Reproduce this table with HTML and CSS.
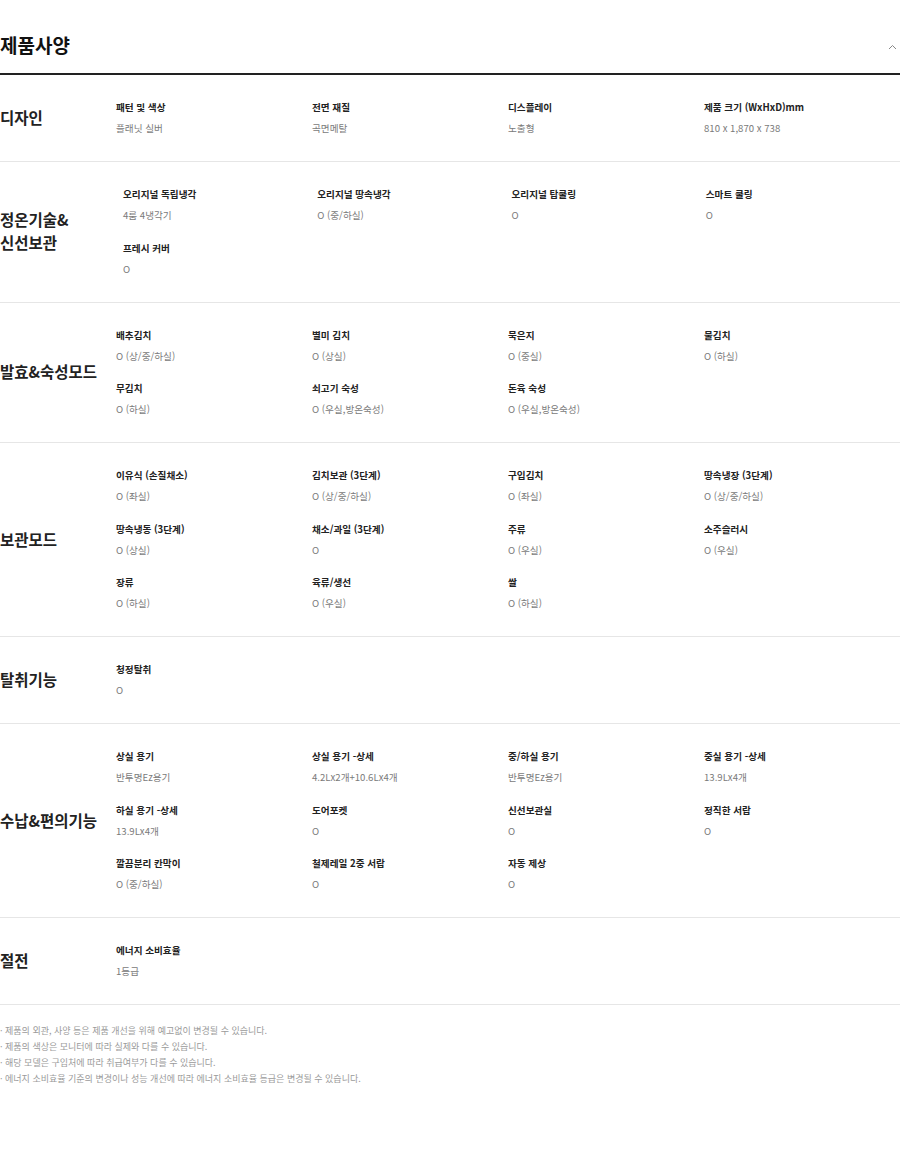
FILE: index.html
```html
<!DOCTYPE html>
<html lang="ko">
<head>
<meta charset="utf-8">
<title>제품사양</title>
<link rel="stylesheet" href="styles.css">
</head>
<body>
<div class="spec">
  <div class="spec-head">
    <h2 class="spec-title">제품사양</h2>
    <svg class="chev" width="9" height="6" viewBox="0 0 9 6"><polyline points="1,5 4.5,1.5 8,5" fill="none" stroke="#888" stroke-width="1"/></svg>
  </div>

  <section class="group">
    <div class="cat">디자인</div>
    <div class="items">
      <div class="item"><div class="lbl">패턴 및 색상</div><div class="val">플래닛 실버</div></div>
      <div class="item"><div class="lbl">전면 재질</div><div class="val">곡면메탈</div></div>
      <div class="item"><div class="lbl">디스플레이</div><div class="val">노출형</div></div>
      <div class="item"><div class="lbl">제품 크기 (WxHxD)mm</div><div class="val">810 x 1,870 x 738</div></div>
    </div>
  </section>

  <section class="group group-wide">
    <div class="cat">정온기술&amp;<br>신선보관</div>
    <div class="items">
      <div class="item"><div class="lbl">오리지널 독립냉각</div><div class="val">4룸 4냉각기</div></div>
      <div class="item"><div class="lbl">오리지널 땅속냉각</div><div class="val">O (중/하실)</div></div>
      <div class="item"><div class="lbl">오리지널 탑쿨링</div><div class="val">O</div></div>
      <div class="item"><div class="lbl">스마트 쿨링</div><div class="val">O</div></div>
      <div class="item"><div class="lbl">프레시 커버</div><div class="val">O</div></div>
    </div>
  </section>

  <section class="group">
    <div class="cat">발효&amp;숙성모드</div>
    <div class="items">
      <div class="item"><div class="lbl">배추김치</div><div class="val">O (상/중/하실)</div></div>
      <div class="item"><div class="lbl">별미 김치</div><div class="val">O (상실)</div></div>
      <div class="item"><div class="lbl">묵은지</div><div class="val">O (중실)</div></div>
      <div class="item"><div class="lbl">물김치</div><div class="val">O (하실)</div></div>
      <div class="item"><div class="lbl">무김치</div><div class="val">O (하실)</div></div>
      <div class="item"><div class="lbl">쇠고기 숙성</div><div class="val">O (우실,방온숙성)</div></div>
      <div class="item"><div class="lbl">돈육 숙성</div><div class="val">O (우실,방온숙성)</div></div>
    </div>
  </section>

  <section class="group">
    <div class="cat">보관모드</div>
    <div class="items">
      <div class="item"><div class="lbl">이유식 (손질채소)</div><div class="val">O (좌실)</div></div>
      <div class="item"><div class="lbl">김치보관 (3단계)</div><div class="val">O (상/중/하실)</div></div>
      <div class="item"><div class="lbl">구입김치</div><div class="val">O (좌실)</div></div>
      <div class="item"><div class="lbl">땅속냉장 (3단계)</div><div class="val">O (상/중/하실)</div></div>
      <div class="item"><div class="lbl">땅속냉동 (3단계)</div><div class="val">O (상실)</div></div>
      <div class="item"><div class="lbl">채소/과일 (3단계)</div><div class="val">O</div></div>
      <div class="item"><div class="lbl">주류</div><div class="val">O (우실)</div></div>
      <div class="item"><div class="lbl">소주슬러시</div><div class="val">O (우실)</div></div>
      <div class="item"><div class="lbl">장류</div><div class="val">O (하실)</div></div>
      <div class="item"><div class="lbl">육류/생선</div><div class="val">O (우실)</div></div>
      <div class="item"><div class="lbl">쌀</div><div class="val">O (하실)</div></div>
    </div>
  </section>

  <section class="group">
    <div class="cat">탈취기능</div>
    <div class="items">
      <div class="item"><div class="lbl">청정탈취</div><div class="val">O</div></div>
    </div>
  </section>

  <section class="group">
    <div class="cat">수납&amp;편의기능</div>
    <div class="items">
      <div class="item"><div class="lbl">상실 용기</div><div class="val">반투명Ez용기</div></div>
      <div class="item"><div class="lbl">상실 용기 -상세</div><div class="val">4.2Lx2개+10.6Lx4개</div></div>
      <div class="item"><div class="lbl">중/하실 용기</div><div class="val">반투명Ez용기</div></div>
      <div class="item"><div class="lbl">중실 용기 -상세</div><div class="val">13.9Lx4개</div></div>
      <div class="item"><div class="lbl">하실 용기 -상세</div><div class="val">13.9Lx4개</div></div>
      <div class="item"><div class="lbl">도어포켓</div><div class="val">O</div></div>
      <div class="item"><div class="lbl">신선보관실</div><div class="val">O</div></div>
      <div class="item"><div class="lbl">정직한 서랍</div><div class="val">O</div></div>
      <div class="item"><div class="lbl">깔끔분리 칸막이</div><div class="val">O (중/하실)</div></div>
      <div class="item"><div class="lbl">철제레일 2중 서랍</div><div class="val">O</div></div>
      <div class="item"><div class="lbl">자동 제상</div><div class="val">O</div></div>
    </div>
  </section>

  <section class="group">
    <div class="cat">절전</div>
    <div class="items">
      <div class="item"><div class="lbl">에너지 소비효율</div><div class="val">1등급</div></div>
    </div>
  </section>

  <ul class="notes">
    <li>· 제품의 외관, 사양 등은 제품 개선을 위해 예고없이 변경될 수 있습니다.</li>
    <li>· 제품의 색상은 모니터에 따라 실제와 다를 수 있습니다.</li>
    <li>· 해당 모델은 구입처에 따라 취급여부가 다를 수 있습니다.</li>
    <li>· 에너지 소비효율 기준의 변경이나 성능 개선에 따라 에너지 소비효율 등급은 변경될 수 있습니다.</li>
  </ul>
</div>
</body>
</html>
```

FILE: styles.css
```css
* { box-sizing: border-box; }
html, body { margin: 0; padding: 0; background: #fff; }
body {
  font-family: "Noto Sans CJK KR", "Noto Sans", sans-serif;
  color: #222;
}
.spec { width: 900px; }
.spec-head {
  height: 75px;
  display: flex;
  justify-content: space-between;
  align-items: center;
  padding-top: 17px;
  border-bottom: 2px solid #222;
}
.spec-title {
  margin: 0;
  font-size: 19px;
  font-weight: 700;
  line-height: 24px;
  color: #111;
}
.chev { margin-right: 3px; margin-top: 3px; }
.group {
  display: flex;
  align-items: center;
  padding: 24px 0 25px;
  border-bottom: 1px solid #e6e6e6;
}
.cat {
  width: 116px;
  flex: none;
  font-size: 15.5px;
  font-weight: 700;
  line-height: 23px;
  color: #222;
}
.group-wide .cat { width: 123px; }
.items {
  flex: 1;
  display: grid;
  grid-template-columns: repeat(4, 1fr);
  row-gap: 16.5px;
}
.item { display: flex; flex-direction: column; gap: 5px; }
.lbl {
  font-size: 9.6px;
  font-weight: 700;
  line-height: 16px;
  color: #222;
  white-space: nowrap;
}
.val {
  font-size: 9.6px;
  line-height: 16px;
  color: #7a7a7a;
  white-space: nowrap;
}
.notes {
  list-style: none;
  margin: 18px 0 0;
  padding: 0;
}
.notes li {
  font-size: 9px;
  line-height: 16px;
  color: #9a9a9a;
  white-space: nowrap;
}
```
